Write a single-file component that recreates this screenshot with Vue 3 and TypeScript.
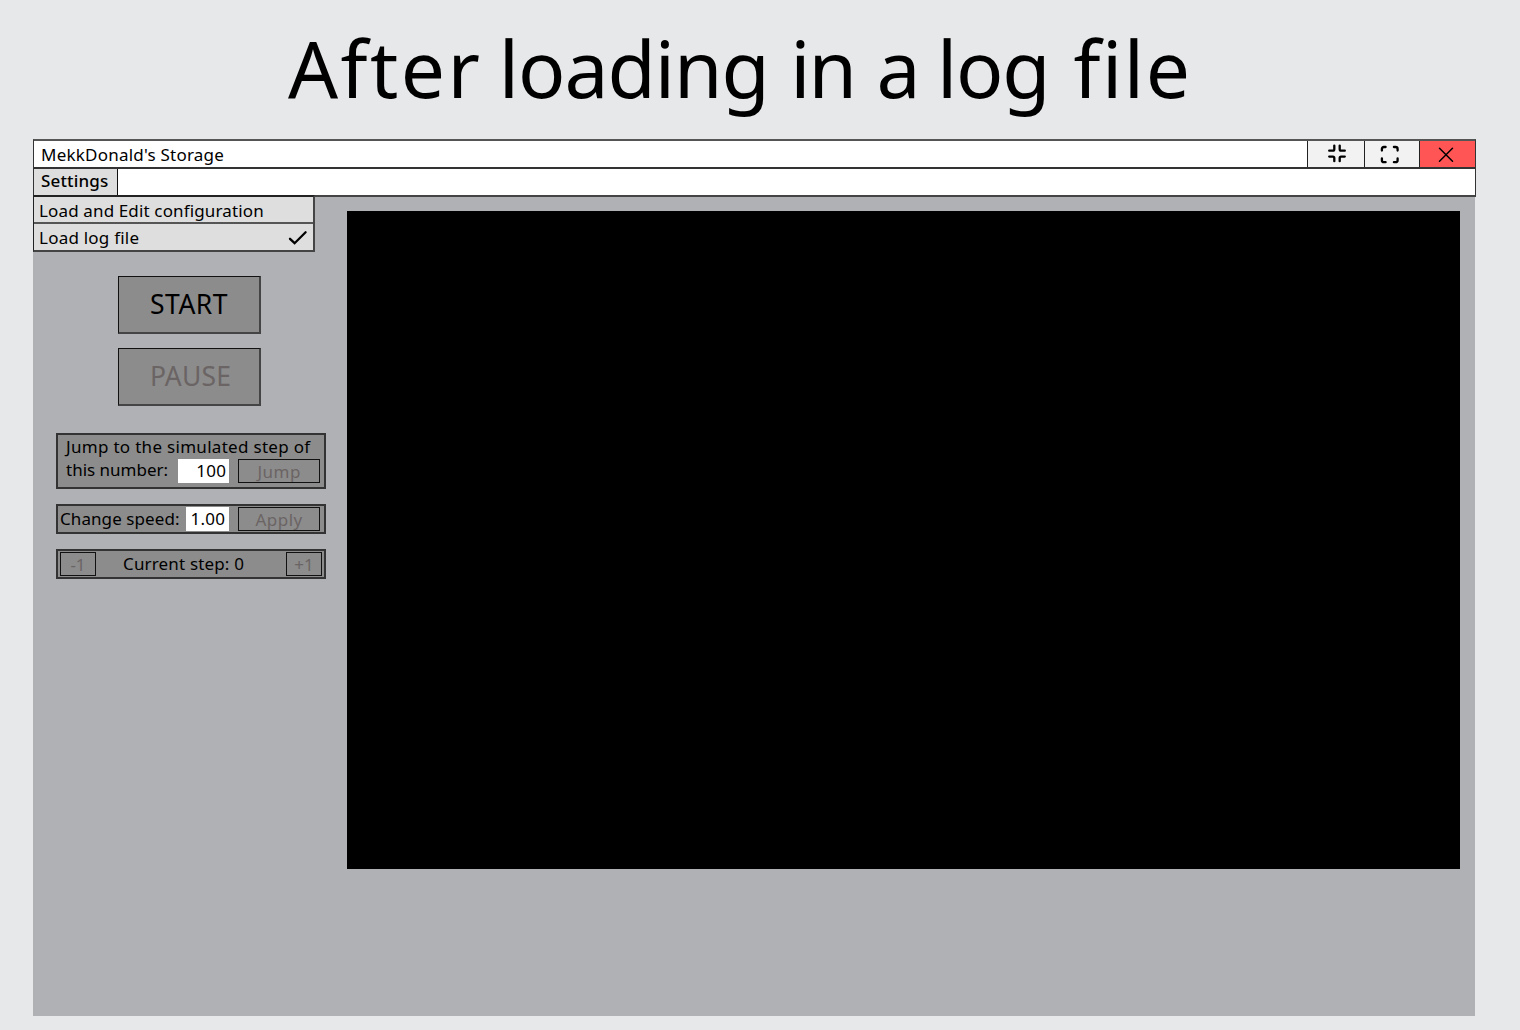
<script setup lang="ts">
import { ref } from 'vue'

const jumpTarget = ref('100')
const speed = ref('1.00')
const currentStep = ref(0)
</script>

<template>
  <main class="page">
    <h1 class="heading"><span class="w1">After</span> <span class="w2">loading</span> <span class="w3">in</span> <span class="w4">a</span> <span class="w5">log</span> <span class="w6">file</span></h1>
    <section class="window">
      <header class="titlebar">
        <span class="t app-name">MekkDonald's Storage</span>
        <div class="controls">
          <button class="ctl min" aria-label="Restore">
            <svg width="20" height="20" viewBox="0 0 20 20"><path d="M7.300 1.600v3.700q0 1.400-1.400 1.400H2.200M12.700 1.600v3.700q0 1.400 1.400 1.400h3.700M7.300 17.200v-3.200q0-1.400-1.400-1.400H2.200M12.700 17.200v-3.200q0-1.400 1.400-1.400h3.700" /></svg>
          </button>
          <button class="ctl max" aria-label="Maximize">
            <svg width="20" height="20" viewBox="0 0 20 20"><path d="M1.900 5.500V4q0-2 2-2h1.700M13.900 2h1.700q2 0 2 2v1.500M1.900 13.500v1.700q0 2 2 2h1.700M13.900 17.200h1.700q2 0 2-2v-1.700" /></svg>
          </button>
          <button class="ctl close" aria-label="Close">
            <svg width="20" height="20" viewBox="0 0 20 20"><path d="M3.500 3.200l13 13M16.500 3.200l-13 13" /></svg>
          </button>
        </div>
      </header>
      <nav class="menubar">
        <div class="menu-tab"><span class="t settings">Settings</span></div>
        <div class="menu">
          <div class="item"><span class="t cfg">Load and Edit configuration</span></div>
          <div class="item">
            <span class="t log">Load log file</span>
            <svg class="check" width="20" height="16" viewBox="0 0 20 16"><path d="M2 8.800l4.600 4.400L17.600 2.200" /></svg>
          </div>
        </div>
      </nav>
      <div class="body">
        <aside class="side">
          <button class="big start"><span class="t">START</span></button>
          <button class="big pause"><span class="t">PAUSE</span></button>
          <div class="panel jump">
            <span class="t jl1">Jump to the simulated step of</span>
            <div class="line">
              <span class="t jl2">this number:</span>
              <span class="field f1"><span class="t">{{ jumpTarget }}</span></span>
              <button class="small"><span class="t jb">Jump</span></button>
            </div>
          </div>
          <div class="panel speed">
            <span class="t sl">Change speed:</span>
            <span class="field f2"><span class="t">{{ speed }}</span></span>
            <button class="small"><span class="t ab">Apply</span></button>
          </div>
          <div class="panel step">
            <button class="tiny"><span class="t">-1</span></button>
            <span class="t cs">Current step: {{ currentStep }}</span>
            <button class="tiny"><span class="t">+1</span></button>
          </div>
        </aside>
        <div class="canvas"></div>
      </div>
    </section>
  </main>
</template>

<style>
body { margin: 0; background: #e7e8ea; }
</style>

<style scoped>
* { box-sizing: border-box; }
.page {
  width: 1520px;
  height: 1030px;
  overflow: hidden;
  background: #e7e8ea;
  color: #000;
  font-family: "Noto Sans", "Open Sans", sans-serif;
  font-size: 17px;
}
button { font: inherit; color: inherit; margin: 0; padding: 0; }
.t { display: block; white-space: nowrap; line-height: 24px; }
svg { display: block; fill: none; stroke: #000; stroke-width: 2.3; stroke-linecap: round; }
.heading {
  margin: 0;
  height: 139px;
  padding: 14px 0 0 288px;
  font-weight: 400;
  font-size: 78.500px;
  line-height: 108px;
  letter-spacing: 0.02px;
  white-space: nowrap;
}
.w1 { letter-spacing: 2.4px; margin-right: -4px; }
.w2 { letter-spacing: -1px; margin-right: 1px; }
.w3 { letter-spacing: -2px; margin-right: 1px; }
.w4 { margin-right: -4px; }
.w5 { letter-spacing: -1.2px; margin-right: 3.600px; }
.w6 { letter-spacing: 1.6px; }
.window { width: 1443px; margin-left: 33px; height: 877px; }
.titlebar {
  display: flex;
  justify-content: space-between;
  height: 28px;
  background: #fff;
  border: 1px solid #333;
  border-top: 2px solid #555;
  border-bottom: 0;
}
.app-name { margin: 2px 0 0 7px; letter-spacing: 0.22px; }
.controls { display: flex; }
.ctl { display: flex; height: 26px; background: #f2f2f2; border: 0; border-left: 1px solid #222; }
.min { width: 57px; padding: 3px 0 0 19px; }
.max { width: 55px; padding: 4px 0 0 15px; }
.close { width: 56px; padding: 4px 0 0 16px; background: #ff5555; }
.close svg { stroke-width: 1.5; }
.menubar {
  position: relative;
  height: 30px;
  background: #fff;
  border: 1px solid #333;
  border-top: 2px solid #333;
  border-bottom: 2px solid #444;
}
.menu-tab { width: 84px; height: 26px; padding-left: 7px; background: #dedede; border-right: 1px solid #111; }
.settings { letter-spacing: 0.15px; font-weight: 500; }
.menu {
  position: absolute;
  z-index: 1;
  left: -1px;
  top: 26px;
  width: 282px;
  height: 57px;
  background: #dedede;
  border: 1px solid #222;
  border-top: 2px solid #222;
  border-right: 2px solid #444;
  border-bottom: 2px solid #444;
}
.item { display: flex; justify-content: space-between; height: 25px; padding: 2px 5px 0; }
.item + .item { height: 28px; border-top: 2px solid #555; padding-top: 2px; }
.cfg { letter-spacing: 0.14px; }
.log { letter-spacing: 0.22px; }
.check { margin: 4px 0 0; }
.body { display: flex; width: 1442px; height: 819px; padding: 14px 15px 0 23px; background: #b0b1b5; }
.side { width: 291px; padding-top: 65px; }
.big {
  display: flex;
  width: 143px;
  height: 58px;
  margin: 0 0 14px 62px;
  padding: 10px 0 0 31px;
  background: #8c8c8c;
  border: 1px solid #111;
  border-right: 2px solid #444;
  border-bottom: 2px solid #444;
  font-size: 26.500px;
}
.big .t { line-height: 34px; letter-spacing: 0.5px; }
.pause { color: #6b6464; margin-bottom: 27px; }
.big.pause .t { letter-spacing: 0.15px; }
.panel { width: 270px; background: #8c8c8c; border: 2px solid #333; }
.jump { height: 56px; }
.line { display: flex; }
.jl1, .jl2 { margin-left: 8px; }
.jl1 { letter-spacing: 0.3px; }
.jl2 { margin-top: -1px; }
.field { display: block; height: 24px; background: #fff; }
.small { width: 82px; height: 24px; background: transparent; border: 1px solid #111; color: #6b6464; letter-spacing: 0.5px; }
.speed { display: flex; height: 30px; margin: 15px 0; padding: 1px 0 0 2px; }
.sl { letter-spacing: 0.08px; }
.step { display: flex; height: 30px; padding: 1px 2px 0; }
.tiny { width: 36px; height: 24px; background: transparent; border: 1px solid #111; color: #6b6464; }
.cs { width: 164px; margin: 0 0 0 27px; letter-spacing: 0.16px; }
.step .tiny:last-child { margin-left: -1px; }
.line .f1 { margin-left: 10px; width: 51px; padding-left: 18px; letter-spacing: 0.3px; }
.line .small { margin-left: 9px; }
.speed .f2 { margin-left: 6px; width: 43px; padding-left: 5px; letter-spacing: 0.2px; }
.speed .small { margin-left: 9px; padding-left: 1px; }
.canvas { width: 1113px; height: 658px; background: #000; }
</style>
